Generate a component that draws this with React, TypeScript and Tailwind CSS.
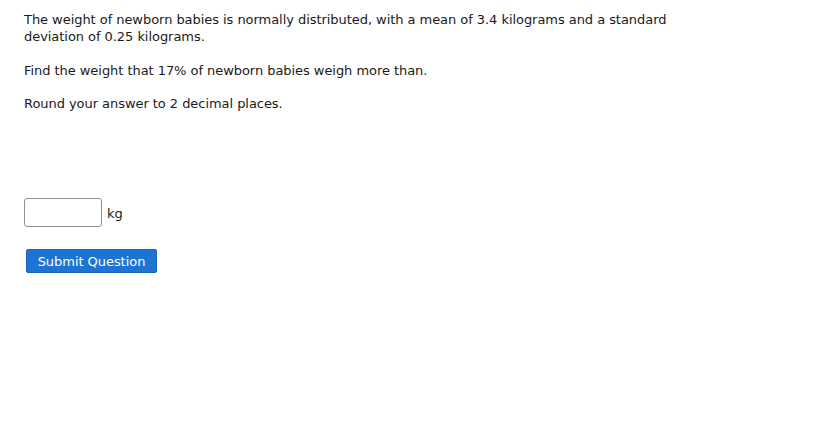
export default function App() {
  return (
    <div className="w-[820px] h-[425px] bg-white text-[13px] leading-[17px] tracking-[-0.05px] text-[#1a1a1a] pl-6 pt-[11px]" style={{ fontFamily: 'Tahoma, "DejaVu Sans", sans-serif' }}>
      <p className="w-[660px]">The weight of newborn babies is normally distributed, with a mean of 3.4 kilograms and a standard deviation of 0.25 kilograms.</p>
      <p className="mt-[17px]">Find the weight that 17% of newborn babies weigh more than.</p>
      <p className="mt-[16px]">Round your answer to 2 decimal places.</p>
      <div className="mt-[86px] flex items-center gap-[5px]">
        <div className="w-[78px] h-[29px] border border-[#8f8f8f] rounded-[3px] bg-white" />
        <span className="pt-[1px]">kg</span>
      </div>
      <button className="mt-[22px] ml-[2px] w-[131px] h-[24px] bg-[#1e74d2] text-white rounded-[2px] border border-[#1a66b8] text-[13px] tracking-[-0.05px]">Submit Question</button>
    </div>
  );
}
